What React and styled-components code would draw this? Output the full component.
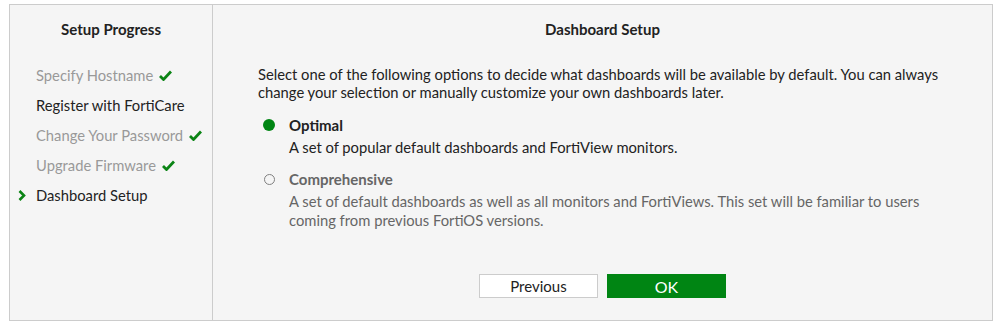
import styled, { createGlobalStyle } from "styled-components";

const Global = createGlobalStyle`
  body {
    margin: 0;
    background: #fff;
    font-family: Lato, "Open Sans", sans-serif;
    color: #222;
  }
`;

const Frame = styled.div`
  box-sizing: border-box;
  display: flex;
  width: 984px;
  height: 317px;
  margin: 4px 0 0 9px;
  border: 1px solid #ccc;
  background: #f5f5f5;
`;

const Sidebar = styled.div`
  box-sizing: border-box;
  width: 203px;
  border-right: 1px solid #ccc;
  padding-top: 14px;
`;

const Title = styled.div`
  font-size: 15px;
  font-weight: bold;
  text-align: center;
  line-height: 20px;
  color: #222;
`;

const Steps = styled.ul`
  list-style: none;
  margin: 21px 0 0;
  padding: 0;
`;

const Step = styled.li`
  display: flex;
  align-items: center;
  height: 30px;
  padding-left: 8px;
  font-size: 14.75px;
  color: ${(p) => (p.$done ? "#999" : "#222")};
`;

const Marker = styled.span`
  display: flex;
  align-items: center;
  width: 18px;
`;

const Check = styled.span`
  display: flex;
  margin-left: 6px;
`;

const Main = styled.div`
  flex: 1;
  display: flex;
  flex-direction: column;
  padding-top: 14px;
`;

const Intro = styled.p`
  margin: 26px 40px 0 45px;
  font-size: 14.75px;
  line-height: 18px;
  color: #222;
`;

const Options = styled.div`
  margin: 14px 0 0 50px;
  display: flex;
  flex-direction: column;
  gap: 12px;
`;

const Option = styled.div`
  display: flex;
  align-items: flex-start;
  gap: 14px;
  color: ${(p) => (p.$active ? "#222" : "#666")};
`;

const Radio = styled.span`
  box-sizing: border-box;
  flex: none;
  margin: ${(p) => (p.$checked ? "4px 0 0" : "5px 0 0 1px")};
  width: ${(p) => (p.$checked ? "12px" : "11px")};
  height: ${(p) => (p.$checked ? "12px" : "11px")};
  border-radius: 50%;
  border: ${(p) => (p.$checked ? "none" : "1.6px solid #808080")};
  background: ${(p) => (p.$checked ? "#008513" : "transparent")};
`;

const OptionBody = styled.div`
  width: 655px;
`;

const OptionName = styled.div`
  font-size: 15px;
  font-weight: bold;
  line-height: 20px;
`;

const OptionDesc = styled.div`
  margin-top: 3px;
  font-size: 14.75px;
  line-height: 19px;
`;

const Actions = styled.div`
  margin-top: auto;
  margin-bottom: 22px;
  display: flex;
  justify-content: center;
  gap: 9px;
`;

const Button = styled.button`
  box-sizing: border-box;
  width: 119px;
  height: 24px;
  padding: 0;
  font-family: inherit;
  font-size: ${(p) => (p.$primary ? "16px" : "15px")};
  color: ${(p) => (p.$primary ? "#fff" : "#222")};
  background: ${(p) => (p.$primary ? "#008513" : "#fff")};
  border: 1px solid ${(p) => (p.$primary ? "#008513" : "#ccc")};
  cursor: pointer;
`;

const CheckIcon = () => (
  <svg width="13" height="11" viewBox="0 0 13 11">
    <path d="M1 6 L4.5 9.5 L12 1.5" fill="none" stroke="#0b8415" strokeWidth="2.8" />
  </svg>
);

const Chevron = () => (
  <svg width="8" height="11" viewBox="0 0 8 11">
    <path d="M1.5 1 L6 5.5 L1.5 10" fill="none" stroke="#0b8415" strokeWidth="2.6" />
  </svg>
);

const steps = [
  { label: "Specify Hostname", done: true },
  { label: "Register with FortiCare", done: false },
  { label: "Change Your Password", done: true },
  { label: "Upgrade Firmware", done: true },
  { label: "Dashboard Setup", current: true },
];

export default function App() {
  return (
    <>
      <Global />
      <Frame>
        <Sidebar>
          <Title>Setup Progress</Title>
          <Steps>
            {steps.map((s) => (
              <Step key={s.label} $done={s.done}>
                <Marker>{s.current && <Chevron />}</Marker>
                {s.label}
                {s.done && (
                  <Check>
                    <CheckIcon />
                  </Check>
                )}
              </Step>
            ))}
          </Steps>
        </Sidebar>
        <Main>
          <Title>Dashboard Setup</Title>
          <Intro>
            Select one of the following options to decide what dashboards will be available by
            default. You can always change your selection or manually customize your own
            dashboards later.
          </Intro>
          <Options>
            <Option $active>
              <Radio $checked />
              <OptionBody>
                <OptionName>Optimal</OptionName>
                <OptionDesc>A set of popular default dashboards and FortiView monitors.</OptionDesc>
              </OptionBody>
            </Option>
            <Option>
              <Radio />
              <OptionBody>
                <OptionName>Comprehensive</OptionName>
                <OptionDesc>
                  A set of default dashboards as well as all monitors and FortiViews. This set will
                  be familiar to users coming from previous FortiOS versions.
                </OptionDesc>
              </OptionBody>
            </Option>
          </Options>
          <Actions>
            <Button>Previous</Button>
            <Button $primary>OK</Button>
          </Actions>
        </Main>
      </Frame>
    </>
  );
}
